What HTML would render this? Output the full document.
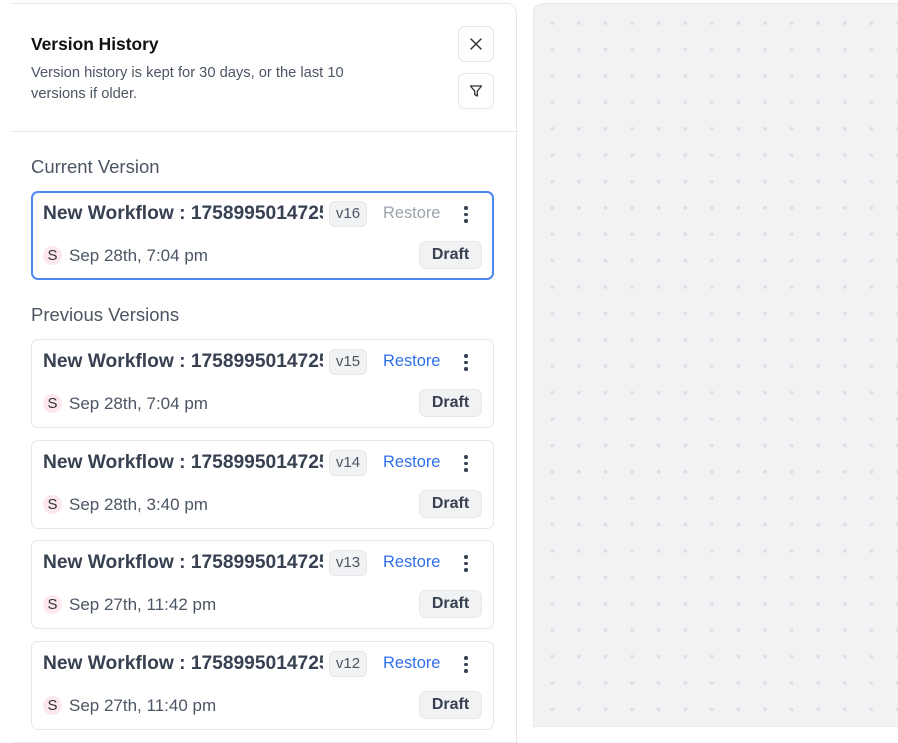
<!DOCTYPE html>
<html><head><style>
*{box-sizing:border-box;margin:0;padding:0}
body{width:898px;height:736px;background:#fff;font-family:"Liberation Sans",sans-serif;position:relative;overflow:hidden}
.panel{position:absolute;left:12px;top:3px;width:505px;height:740px;border:1px solid #e5e7eb;border-left:none;border-top-right-radius:10px;background:#fff}
.canvas{position:absolute;left:533px;top:3px;width:380px;height:724px;border:1px solid #e8e8ec;border-right:none;border-top-left-radius:10px;background-color:#f2f2f5;background-image:radial-gradient(circle,#dfdfe3 1.7px,transparent 2.1px);background-size:26.6px 26.4px;background-position:5px 6px}
.t{position:absolute;left:31px;top:34px;font-size:17.4px;font-weight:bold;color:#111}
.d{position:absolute;left:31px;top:63px;font-size:14.7px;color:#4b5563;line-height:21px;width:370px}
.btn{position:absolute;left:458px;width:36px;height:36px;border:1px solid #e5e7eb;border-radius:7px;display:flex;align-items:center;justify-content:center}
.hr{position:absolute;left:12px;top:131px;width:504px;height:1px;background:#e5e7eb}
.sec{position:absolute;left:31px;font-size:18.5px;color:#4b5563}
.card{position:absolute;left:31px;width:463px;height:89px;border:1px solid #e5e7eb;border-radius:7px;background:#fff}
.card.cur{border:2px solid #4f86f0}
.nm{position:absolute;left:11px;top:11px;width:280px;overflow:hidden;white-space:nowrap;font-size:19.2px;font-weight:bold;color:#374151}
.v{position:absolute;left:297px;top:9px;width:38px;height:26px;border-radius:6px;background:#f1f2f4;border:1px solid #e5e7eb;font-size:15px;color:#4b5563;text-align:center;line-height:24px}
.rs{position:absolute;left:351px;top:12px;font-size:16.4px;color:#2f6fec}
.cur .rs{color:#9ca3af}
.dots{position:absolute;left:432px;top:14px;width:4px}
.dots i{display:block;width:3.5px;height:3.5px;border-radius:50%;background:#374151;margin-bottom:3px}
.av{position:absolute;left:11px;top:54px;width:19px;height:19px;border-radius:50%;background:#fce7f0;font-size:15px;color:#333;text-align:center;line-height:19px}
.dt{position:absolute;left:37px;top:54px;font-size:17px;color:#4b5563}
.dr{position:absolute;left:387px;top:49px;width:63px;height:28px;border-radius:7px;background:#f1f2f4;border:1px solid #e5e7eb;font-size:16px;font-weight:bold;color:#374151;text-align:center;line-height:26px}
.cur .nm,.cur .v,.cur .rs,.cur .dots,.cur .av,.cur .dt,.cur .dr{margin-left:-1px;margin-top:-1px}
</style></head><body>
<div class="panel"></div>
<div class="canvas"></div>
<div class="t">Version History</div>
<div class="d">Version history is kept for 30 days, or the last 10 versions if older.</div>
<div class="btn" style="top:26px"><svg width="14" height="14" viewBox="0 0 14 14"><path d="M2 2L12 12M12 2L2 12" stroke="#333" stroke-width="1.5" stroke-linecap="round"/></svg></div>
<div class="btn" style="top:73px"><svg width="14" height="14" viewBox="0 0 14 14"><path d="M1.5 2h11L8.3 7.2V12L5.7 10.5V7.2Z" fill="none" stroke="#333" stroke-width="1.3" stroke-linejoin="round"/></svg></div>
<div class="hr"></div>
<div class="sec" style="top:156px">Current Version</div>
<div class="card cur" style="top:191px"><div class="nm">New Workflow : 1758995014725</div><div class="v">v16</div><div class="rs">Restore</div><div class="dots"><i></i><i></i><i></i></div><div class="av">S</div><div class="dt">Sep 28th, 7:04 pm</div><div class="dr">Draft</div></div>
<div class="sec" style="top:304px">Previous Versions</div>
<div class="card" style="top:339px"><div class="nm">New Workflow : 1758995014725</div><div class="v">v15</div><div class="rs">Restore</div><div class="dots"><i></i><i></i><i></i></div><div class="av">S</div><div class="dt">Sep 28th, 7:04 pm</div><div class="dr">Draft</div></div>
<div class="card" style="top:440px"><div class="nm">New Workflow : 1758995014725</div><div class="v">v14</div><div class="rs">Restore</div><div class="dots"><i></i><i></i><i></i></div><div class="av">S</div><div class="dt">Sep 28th, 3:40 pm</div><div class="dr">Draft</div></div>
<div class="card" style="top:540px"><div class="nm">New Workflow : 1758995014725</div><div class="v">v13</div><div class="rs">Restore</div><div class="dots"><i></i><i></i><i></i></div><div class="av">S</div><div class="dt">Sep 27th, 11:42 pm</div><div class="dr">Draft</div></div>
<div class="card" style="top:641px"><div class="nm">New Workflow : 1758995014725</div><div class="v">v12</div><div class="rs">Restore</div><div class="dots"><i></i><i></i><i></i></div><div class="av">S</div><div class="dt">Sep 27th, 11:40 pm</div><div class="dr">Draft</div></div>
</body></html>
